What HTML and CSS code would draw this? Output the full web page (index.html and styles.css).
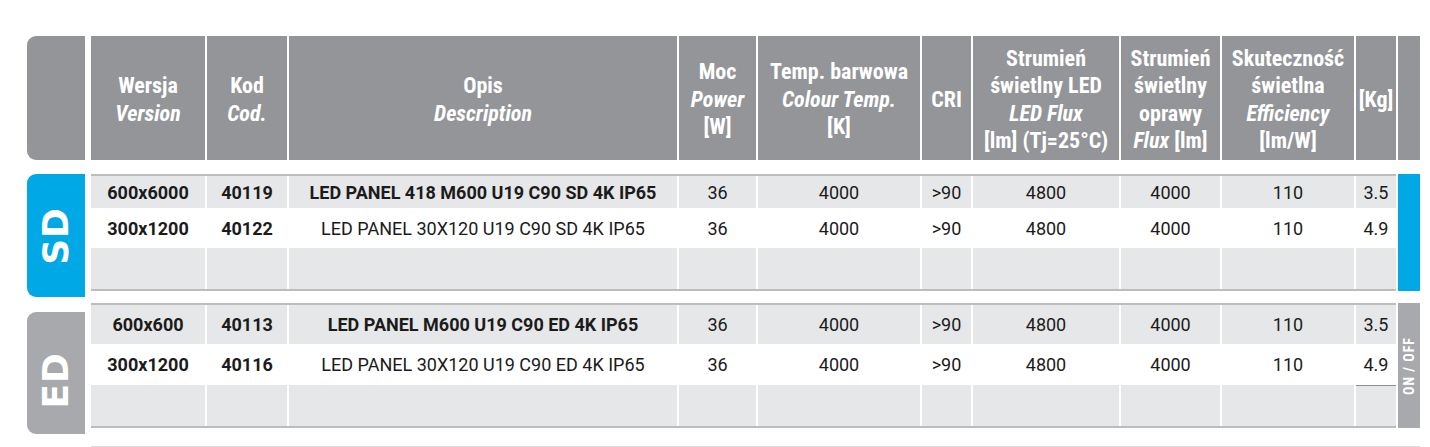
FILE: index.html
```html
<!DOCTYPE html>
<html lang="pl">
<head>
<meta charset="utf-8">
<title>LED PANEL</title>
<link rel="stylesheet" href="styles.css">
</head>
<body>
<div class="page">
  <div class="head">
    <div class="tag tag-head"></div>
    <div class="hgrid">
      <div class="hc"><span>Wersja</span><span class="it">Version</span></div>
      <div class="hc"><span>Kod</span><span class="it">Cod.</span></div>
      <div class="hc"><span>Opis</span><span class="it">Description</span></div>
      <div class="hc"><span>Moc</span><span class="it">Power</span><span>[W]</span></div>
      <div class="hc"><span>Temp. barwowa</span><span class="it">Colour Temp.</span><span>[K]</span></div>
      <div class="hc"><span>CRI</span></div>
      <div class="hc"><span>Strumień</span><span>świetlny LED</span><span class="it">LED Flux</span><span>[lm] (Tj=25°C)</span></div>
      <div class="hc"><span>Strumień</span><span>świetlny</span><span>oprawy</span><span><i>Flux</i> [lm]</span></div>
      <div class="hc"><span>Skuteczność</span><span>świetlna</span><span class="it">Efficiency</span><span>[lm/W]</span></div>
      <div class="hc"><span>[Kg]</span></div>
      <div class="hc"></div>
    </div>
  </div>

  <div class="section sd">
    <div class="tag tag-sd"><span class="tag-text">SD</span></div>
    <div class="tbl">
      <div class="rows">
        <div class="row gray h32">
          <div class="c b">600x6000</div><div class="c b">40119</div><div class="c b">LED PANEL 418 M600 U19 C90 SD 4K IP65</div>
          <div class="c">36</div><div class="c">4000</div><div class="c">&gt;90</div><div class="c">4800</div><div class="c">4000</div><div class="c">110</div><div class="c">3.5</div>
        </div>
        <div class="row white h40">
          <div class="c b">300x1200</div><div class="c b">40122</div><div class="c">LED PANEL 30X120 U19 C90 SD 4K IP65</div>
          <div class="c">36</div><div class="c">4000</div><div class="c">&gt;90</div><div class="c">4800</div><div class="c">4000</div><div class="c">110</div><div class="c">4.9</div>
        </div>
        <div class="row gray h41">
          <div class="c"></div><div class="c"></div><div class="c"></div><div class="c"></div><div class="c"></div><div class="c"></div><div class="c"></div><div class="c"></div><div class="c"></div><div class="c"></div>
        </div>
      </div>
      <div class="strip strip-sd"></div>
    </div>
  </div>

  <div class="section ed">
    <div class="tag tag-ed"><span class="tag-text">ED</span></div>
    <div class="tbl">
      <div class="rows">
        <div class="row gray h39">
          <div class="c b">600x600</div><div class="c b">40113</div><div class="c b">LED PANEL M600 U19 C90 ED 4K IP65</div>
          <div class="c">36</div><div class="c">4000</div><div class="c">&gt;90</div><div class="c">4800</div><div class="c">4000</div><div class="c">110</div><div class="c">3.5</div>
        </div>
        <div class="row white h41">
          <div class="c b">300x1200</div><div class="c b">40116</div><div class="c">LED PANEL 30X120 U19 C90 ED 4K IP65</div>
          <div class="c">36</div><div class="c">4000</div><div class="c">&gt;90</div><div class="c">4800</div><div class="c">4000</div><div class="c">110</div><div class="c">4.9</div>
        </div>
        <div class="row gray h41">
          <div class="c"></div><div class="c"></div><div class="c"></div><div class="c"></div><div class="c"></div><div class="c"></div><div class="c"></div><div class="c"></div><div class="c"></div><div class="c kgline"></div>
        </div>
      </div>
      <div class="strip strip-ed"><span class="onoff">ON / OFF</span></div>
    </div>
  </div>

  <div class="next"></div>
</div>
</body>
</html>
```

FILE: styles.css
```css
body {
  margin: 0;
  background: #ffffff;
}

.page {
  padding: 36px 0 0 27px;
  font-family: "Roboto", "Liberation Sans", sans-serif;
}

.head {
  display: flex;
  gap: 6px;
  height: 124px;
}

.tag {
  width: 58px;
  flex: none;
  border-radius: 9px 0 0 9px;
  display: flex;
  align-items: center;
  justify-content: center;
}

.tag-head {
  background: #939598;
}

.hgrid {
  display: grid;
  grid-template-columns: 114px 80px 388px 77px 162px 49px 146px 99px 132px 40px 22px;
  column-gap: 2px;
}

.hc {
  background: #939598;
  color: #ffffff;
  display: flex;
  flex-direction: column;
  align-items: center;
  justify-content: center;
  text-align: center;
  font-family: "Roboto Condensed", "Roboto", sans-serif;
  font-stretch: condensed;
  font-weight: 700;
  font-size: 22px;
  line-height: 27.5px;
  padding-top: 3px;
}

.hc span {
  display: block;
  white-space: nowrap;
}

.hc .it,
.hc i {
  font-style: italic;
}

.section {
  display: flex;
  gap: 6px;
  align-items: flex-start;
}

.sd {
  margin-top: 14px;
}

.ed {
  margin-top: 12px;
}

.tag-sd {
  background: #00a9e6;
  height: 123px;
  margin-bottom: -8px;
}

.tag-ed {
  background: #a7a9ac;
  height: 122px;
  margin-top: 9px;
  margin-bottom: -9px;
  padding-top: 14px;
  box-sizing: border-box;
}

.tag-text {
  writing-mode: vertical-rl;
  transform: rotate(180deg);
  color: #ffffff;
  font-family: "DejaVu Sans", sans-serif;
  font-weight: 700;
  font-size: 36px;
  line-height: 1;
  letter-spacing: 1px;
}

.tbl {
  display: flex;
  gap: 2px;
}

.rows {
  width: 1305px;
  border-top: 2px solid #bdbdbd;
  border-bottom: 2px solid #bdbdbd;
}

.row {
  display: grid;
  grid-template-columns: 114px 80px 388px 77px 162px 49px 146px 99px 132px 40px;
  column-gap: 2px;
}

.h32 { height: 32px; }
.h39 { height: 39px; }
.h40 { height: 40px; }
.h41 { height: 41px; }

.row.gray .c {
  background: #e6e7e8;
}

.c {
  display: flex;
  align-items: center;
  justify-content: center;
  font-size: 18px;
  color: #1b1b1b;
  white-space: nowrap;
}

.c.b {
  font-weight: 700;
}

.row.gray .kgline {
  border-top: 1px solid #8f8f8f;
}

.strip {
  width: 22px;
}

.strip-sd {
  background: #00a9e6;
}

.strip-ed {
  background: #a7a9ac;
  display: flex;
  align-items: center;
  justify-content: center;
}

.onoff {
  writing-mode: vertical-rl;
  transform: rotate(180deg);
  color: #ffffff;
  font-family: "Roboto Condensed", "Roboto", sans-serif;
  font-stretch: condensed;
  font-weight: 700;
  font-size: 14px;
  letter-spacing: 1px;
  line-height: 1;
}

.next {
  margin: 18px 0 0 64px;
  width: 1329px;
  height: 2px;
  background: #dcdcdc;
}
```
